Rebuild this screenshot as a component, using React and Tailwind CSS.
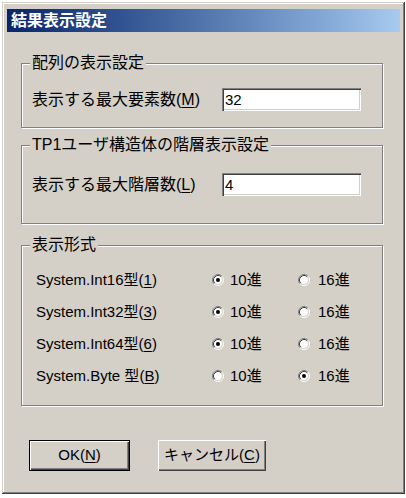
import React from 'react';

// classic 3D radio button
const Radio = ({ checked }) => (
  <svg width="12" height="12" viewBox="0 0 12 12" className="shrink-0">
    <circle cx="6" cy="6" r="4.5" fill="#fff" />
    <path d="M2.11 9.89A5.5 5.5 0 0 1 9.89 2.11" fill="none" stroke="#808080" />
    <path d="M2.82 9.18A4.5 4.5 0 0 1 9.18 2.82" fill="none" stroke="#404040" />
    <path d="M9.89 2.11A5.5 5.5 0 0 1 2.11 9.89" fill="none" stroke="#ffffff" />
    <path d="M9.18 2.82A4.5 4.5 0 0 1 2.82 9.18" fill="none" stroke="#d4d0c8" />
    {checked && <circle cx="6" cy="6" r="2" fill="#000" />}
  </svg>
);

const U = ({ children }) => <span className="underline underline-offset-2">{children}</span>;

const Group = ({ title, className = '', children }) => (
  <fieldset
    className={`ml-[14px] w-[362px] border border-[#808080] shadow-[1px_1px_0_#fff,inset_1px_1px_0_#fff] ${className}`}
  >
    <legend className="ml-[8px] px-[2px] text-[16px] leading-[18px] bg-[#d4d0c8]">{title}</legend>
    {children}
  </fieldset>
);

const Field = ({ value }) => (
  <div className="w-[139px] h-[23px] bg-white pl-[3px] leading-[23px] shadow-[inset_1px_1px_0_#808080,inset_2px_2px_0_#404040,inset_-1px_-1px_0_#fff,inset_-2px_-2px_0_#d4d0c8]">
    {value}
  </div>
);

const rows = [
  { name: 'System.Int16型', key: '1', dec: true },
  { name: 'System.Int32型', key: '3', dec: true },
  { name: 'System.Int64型', key: '6', dec: true },
  { name: 'System.Byte 型', key: 'B', dec: false },
];

export default function App() {
  return (
    <div className="w-[406px] h-[498px] bg-white pt-[2px] pl-[2px] font-[family-name:Liberation_Sans,Noto_Sans_CJK_JP,sans-serif] text-[15px] text-black">
      <div className="w-[403px] h-[492px] bg-[#d4d0c8] pt-[7px] pl-[5px] pr-[5px] flex flex-col shadow-[inset_-1px_-1px_0_#404040,inset_1px_1px_0_#d4d0c8,inset_-2px_-2px_0_#808080,inset_2px_2px_0_#fff]">
        {/* title bar */}
        <div className="h-[23px] bg-linear-to-r from-[#0a246a] to-[#a6caf0] pl-[4px] text-white font-bold text-[16px] leading-[23px]">
          結果表示設定
        </div>

        <Group title="配列の表示設定" className="mt-[22px]">
          <div className="flex items-center h-[23px] box-content pl-[10px] pt-[16px] pb-[16px]">
            <div className="w-[190px] text-[16px] leading-[23px]">表示する最大要素数(<U>M</U>)</div>
            <Field value="32" />
          </div>
        </Group>

        <Group title="TP1ユーザ構造体の階層表示設定" className="mt-[8px]">
          <div className="flex items-center h-[23px] box-content pl-[10px] pt-[19px] pb-[27px]">
            <div className="w-[190px] text-[16px] leading-[23px]">表示する最大階層数(<U>L</U>)</div>
            <Field value="4" />
          </div>
        </Group>

        <Group title="表示形式" className="mt-[12px]">
          <div className="flex flex-col gap-[12px] pl-[14px] pt-[16px] pb-[19px]">
            {rows.map((r) => (
              <div key={r.key} className="flex items-center h-[20px]">
                <div className="w-[176px]">
                  {r.name}(<U>{r.key}</U>)
                </div>
                <div className="w-[86px] flex items-center gap-[6px]">
                  <Radio checked={r.dec} />
                  <span>10進</span>
                </div>
                <div className="flex items-center gap-[8px]">
                  <Radio checked={!r.dec} />
                  <span>16進</span>
                </div>
              </div>
            ))}
          </div>
        </Group>

        {/* buttons */}
        <div className="flex mt-[34px] ml-[22px] gap-[28px]">
          <div className="w-[101px] h-[31px] border border-black flex items-center justify-center shadow-[inset_1px_1px_0_#fff,inset_-1px_-1px_0_#404040,inset_-2px_-2px_0_#808080]">
            OK(<U>N</U>)
          </div>
          <div className="w-[108px] h-[31px] flex items-center justify-center shadow-[inset_1px_1px_0_#fff,inset_-1px_-1px_0_#404040,inset_-2px_-2px_0_#808080]">
            キャンセル(<U>C</U>)
          </div>
        </div>
      </div>
    </div>
  );
}
